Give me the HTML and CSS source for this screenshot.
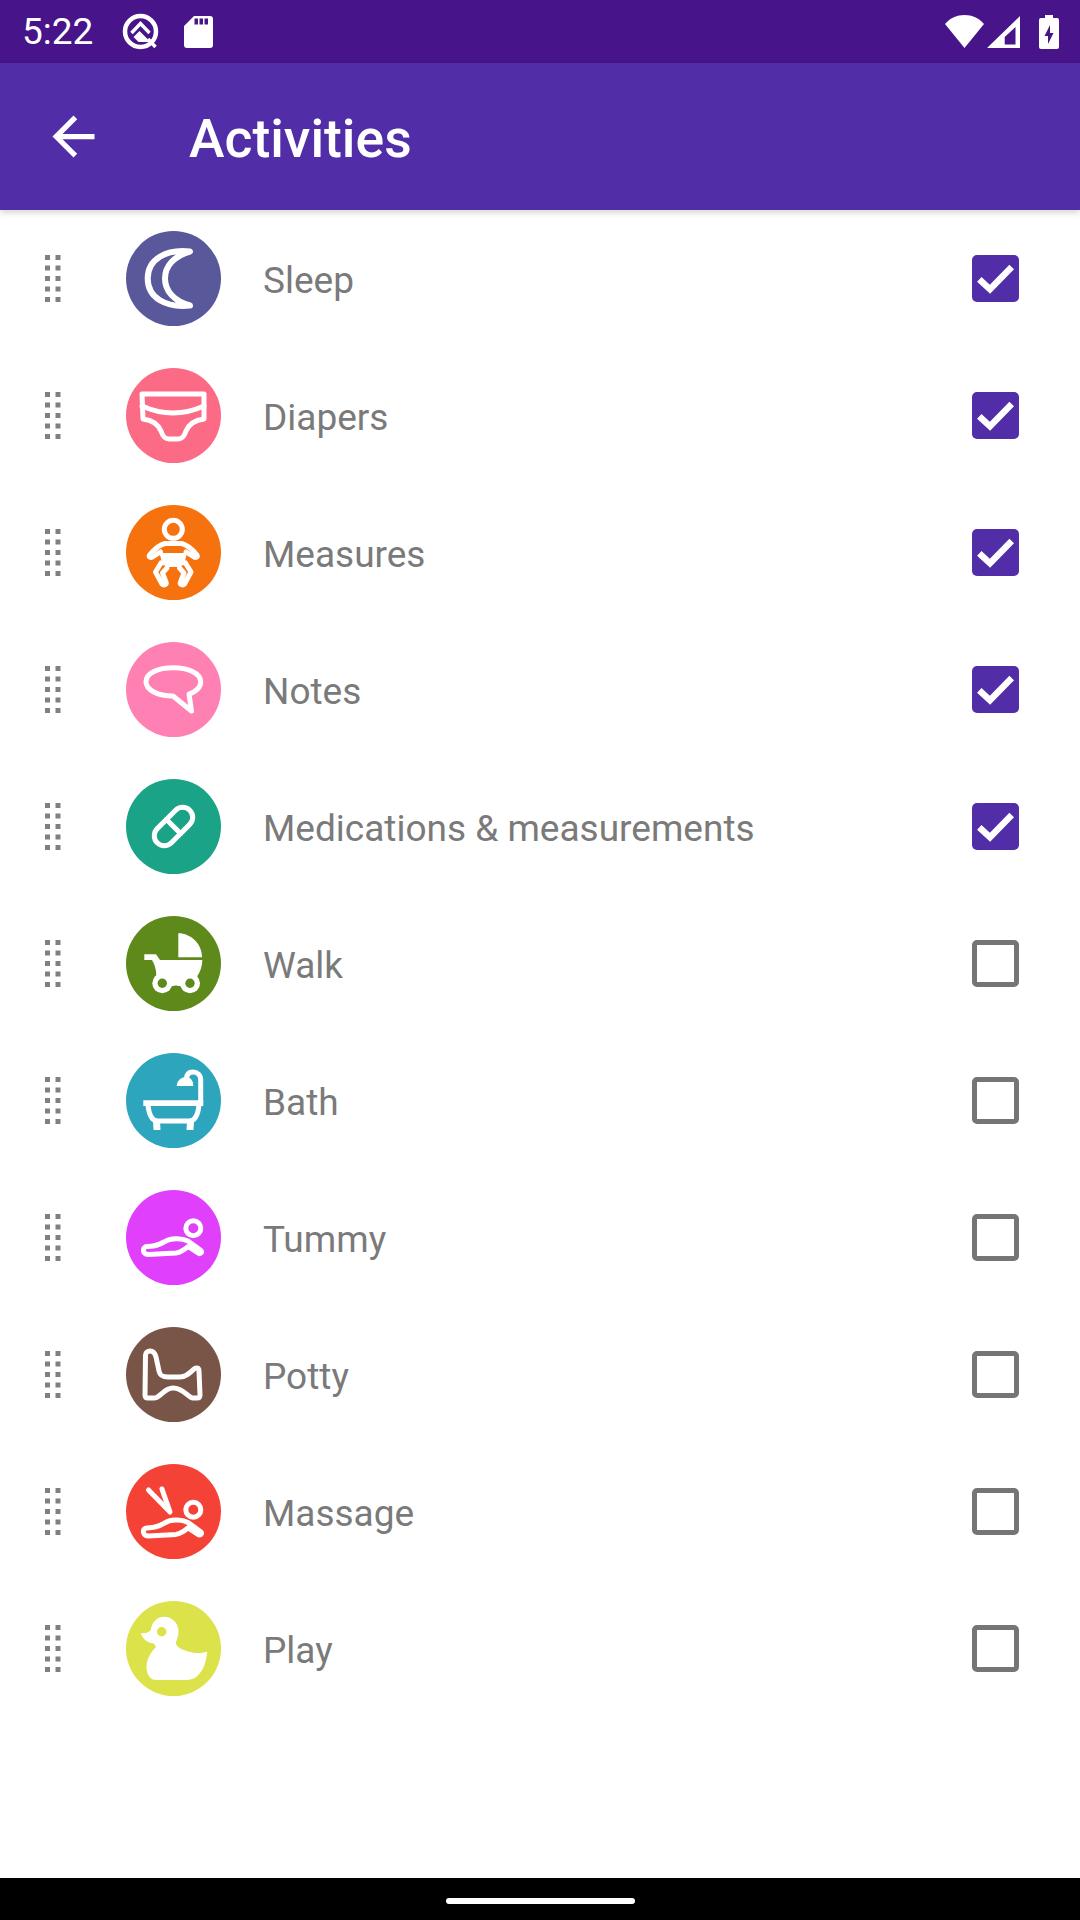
FILE: index.html
```html
<!DOCTYPE html>
<html>
<head>
    <meta charset="utf-8">
    <meta name="viewport" content="width=device-width, initial-scale=1">
    <title>Activities</title>
    <link rel="stylesheet" href="styles.css">
</head>
<body>

    <!-- Status bar -->
    <div class="status-bar">
        <span class="time">5:22</span>
        <svg class="status-q" viewBox="0 0 37 37">
            <circle cx="18.5" cy="18.5" r="15.5" fill="none" stroke="#fff" stroke-width="4.5"/>
            <path d="M9.5 20 L18.5 10.5 L27.5 20" fill="none" stroke="#fff" stroke-width="3.4"/>
            <path d="M11.5 24 L17.5 18 L28.5 29 H16.5 Z" fill="#fff"/>
            <path d="M26 26 L33.5 34" fill="none" stroke="#fff" stroke-width="3.4"/>
        </svg>
        <svg class="status-sd" viewBox="0 0 29 32">
            <path fill="#fff" fill-rule="evenodd" d="M10 0 H26 Q29 0 29 3 V29 Q29 32 26 32 H3 Q0 32 0 29 V10 Z M10.5 2.5 V8.5 H14 V2.5 Z M15.5 2.5 V8.5 H19 V2.5 Z M20.5 2.5 V8.5 H24 V2.5 Z"/>
        </svg>
        <div class="status-right">
            <svg class="status-wifi" viewBox="0 0 39 33">
                <path fill="#fff" d="M0 9 C5 3 12 0 19.5 0 C27 0 34 3 39 9 L19.5 33 Z"/>
            </svg>
            <svg class="status-signal" viewBox="0 0 33 32">
                <path fill="#fff" fill-rule="evenodd" d="M33 0 V32 H0 Z M28.5 11 L17.7 21 V28.5 H28.5 Z"/>
            </svg>
            <svg class="status-battery" viewBox="0 0 20 34">
                <path fill="#fff" fill-rule="evenodd" d="M6 0 H14 V3 H18 Q20 3 20 5 V32 Q20 34 18 34 H2 Q0 34 0 32 V5 Q0 3 2 3 H6 Z M11 10 L5.5 21 H9 V29 L14.5 18 H11 Z"/>
            </svg>
        </div>
    </div>

    <!-- App bar -->
    <div class="app-bar">
        <svg class="back" viewBox="0 0 24 24">
            <path fill="#fff" d="M20 11H7.83l5.59-5.59L12 4l-8 8 8 8 1.41-1.41L7.83 13H20v-2z"/>
        </svg>
        <h1 class="title">Activities</h1>
    </div>

    <div class="list">

        <div class="row">
            <svg class="grip" viewBox="0 0 16 47"><use href="#grip-dots"/></svg>
            <div class="avatar sleep">
                <svg viewBox="0 0 95 95">
                    <path class="line moon" d="M64 20.5 C40 18 21.7 28 21.7 47.5 C21.7 67 40 77 64 74.5 C48 70 39 60 39 47.5 C39 35 48 25 64 20.5 Z"/>
                </svg>
            </div>
            <span class="name">Sleep</span>
            <div class="check on"><svg viewBox="0 0 47 47"><use href="#tick"/></svg></div>
        </div>

        <div class="row">
            <svg class="grip" viewBox="0 0 16 47"><use href="#grip-dots"/></svg>
            <div class="avatar diapers">
                <svg viewBox="0 0 95 95">
                    <path class="line" d="M16 26 H78 V51 C70 52 63 56 60 63 C58 69 56 71 52 71 H43 C39 71 37 69 35 63 C32 56 25 52 17 51 Z"/>
                    <path class="line" d="M16 38 Q47 52 78 38"/>
                </svg>
            </div>
            <span class="name">Diapers</span>
            <div class="check on"><svg viewBox="0 0 47 47"><use href="#tick"/></svg></div>
        </div>

        <div class="row">
            <svg class="grip" viewBox="0 0 16 47"><use href="#grip-dots"/></svg>
            <div class="avatar measures">
                <svg viewBox="0 0 95 95">
                    <circle class="line" cx="47.3" cy="24.3" r="9"/>
                    <path class="line" d="M39 38.5 H55.5 C60 39.5 66 44 71 50 C72 52 70 53 68 52 L60 47 M39 38.5 C34.5 39.5 28.5 44 23.5 50 C22.5 52 24.5 53 26.5 52 L34.5 47"/>
                    <path class="solid" d="M33.5 48 H61 L58 60 L52 62 H42.5 L36.5 60 Z"/>
                    <path class="line" d="M35 58 L29.5 67 L36 79 C38 81 41 79 40 77 L36.5 68 L41 63 M59.5 58 L65 67 L58.5 79 C56.5 81 53.5 79 54.5 77 L58 68 L53.5 63"/>
                </svg>
            </div>
            <span class="name">Measures</span>
            <div class="check on"><svg viewBox="0 0 47 47"><use href="#tick"/></svg></div>
        </div>

        <div class="row">
            <svg class="grip" viewBox="0 0 16 47"><use href="#grip-dots"/></svg>
            <div class="avatar notes">
                <svg viewBox="0 0 95 95">
                    <path class="line" d="M47 54 C32 54 20 48 20 39.7 C20 31 32 25.7 47.3 25.7 C62 25.7 74.7 31 74.7 39.7 C74.7 45 70 49.5 63 52 L65.5 69 L47 54 Z"/>
                </svg>
            </div>
            <span class="name">Notes</span>
            <div class="check on"><svg viewBox="0 0 47 47"><use href="#tick"/></svg></div>
        </div>

        <div class="row">
            <svg class="grip" viewBox="0 0 16 47"><use href="#grip-dots"/></svg>
            <div class="avatar meds">
                <svg viewBox="0 0 95 95">
                    <g transform="rotate(-45 47.5 47.5)">
                        <rect class="line" x="24.5" y="37.5" width="46" height="20" rx="10"/>
                        <path class="line" d="M47.5 37.5 V57.5"/>
                    </g>
                </svg>
            </div>
            <span class="name">Medications &amp; measurements</span>
            <div class="check on"><svg viewBox="0 0 47 47"><use href="#tick"/></svg></div>
        </div>

        <div class="row">
            <svg class="grip" viewBox="0 0 16 47"><use href="#grip-dots"/></svg>
            <div class="avatar walk">
                <svg viewBox="0 0 95 95">
                    <path class="solid" d="M52.3 17.3 C65 17.3 76 28 76 41.3 H52.3 Z"/>
                    <path class="solid" d="M18.3 38.3 H30 L34 44 H76.3 C76.3 50 74 57 70 62 H30 C31 56 29 49 26 44 H18.3 Z"/>
                    <circle class="solid" cx="36.3" cy="67.3" r="10"/>
                    <circle class="solid" cx="64" cy="67.3" r="10"/>
                    <path class="solid" d="M36 60 H64 V70 H36 Z"/>
                    <circle class="hole" cx="36.3" cy="67.3" r="4.7"/>
                    <circle class="hole" cx="64" cy="67.3" r="4.7"/>
                    <path class="hole" d="M44 77.5 C45 71 48 69.5 50 69.5 C52 69.5 55 71 56 77.5 Z"/>
                </svg>
            </div>
            <span class="name">Walk</span>
            <div class="check"></div>
        </div>

        <div class="row">
            <svg class="grip" viewBox="0 0 16 47"><use href="#grip-dots"/></svg>
            <div class="avatar bath">
                <svg viewBox="0 0 95 95">
                    <path class="solid" d="M17.3 47.3 H77.3 V53 H17.3 Z"/>
                    <path class="line" d="M22 52 C23 62 26 68 32 68 H63 C69 68 72 62 73 52"/>
                    <path class="solid" d="M27 68 H34 L34.5 77 H27.5 Z M61 68 H68 L67.5 77 H60.5 Z"/>
                    <path class="line" d="M74.7 48 V27 C74.7 22 71 19 67 19 C62 19 60.5 22 60.5 26"/>
                    <path class="solid" d="M50.7 33 C51 27 56 24 60 24 C64 24 67.3 27 67.3 33 Z"/>
                </svg>
            </div>
            <span class="name">Bath</span>
            <div class="check"></div>
        </div>

        <div class="row">
            <svg class="grip" viewBox="0 0 16 47"><use href="#grip-dots"/></svg>
            <div class="avatar tummy">
                <svg viewBox="0 0 95 95">
                    <circle class="line" cx="67.3" cy="38.3" r="7.5"/>
                    <path class="line" d="M21 56.5 C28 56.5 33 55 38 52 C44 48 55 47.5 62 51 L75 60.5 C76.5 62.5 74 64.5 72 63 L62 56.5 C58 60 56 62 50 63 L22 64.5 C16 64.5 16 56.5 21 56.5 Z"/>
                </svg>
            </div>
            <span class="name">Tummy</span>
            <div class="check"></div>
        </div>

        <div class="row">
            <svg class="grip" viewBox="0 0 16 47"><use href="#grip-dots"/></svg>
            <div class="avatar potty">
                <svg viewBox="0 0 95 95">
                    <path class="line" d="M24 24 C27 24 29 26 30 30 L33 44 C34 49 37 50 42 50 H54 C60 50 64 46 68 42 C71 40 73 41 73 44 L74 68 C74 70 73 71 71 71 H67 C62 71 58 61 47 61 C38 61 34 71 28 71 H22 C20 71 19 70 19 68 L19.5 28 C19.5 25.5 21.5 24 24 24 Z"/>
                </svg>
            </div>
            <span class="name">Potty</span>
            <div class="check"></div>
        </div>

        <div class="row">
            <svg class="grip" viewBox="0 0 16 47"><use href="#grip-dots"/></svg>
            <div class="avatar massage">
                <svg viewBox="0 0 95 95">
                    <circle class="line" cx="67.3" cy="45.7" r="7.5"/>
                    <path class="line" d="M21 63.9 C28 63.9 33 62.4 38 59.4 C44 55.4 55 54.9 62 58.4 L75 67.9 C76.5 69.9 74 71.9 72 70.4 L62 63.9 C58 67.4 56 69.4 50 70.4 L22 71.9 C16 71.9 16 63.9 21 63.9 Z"/>
                    <path class="line" d="M22.5 26 L44 48 C41.5 40 38.5 33 36 25"/>
                </svg>
            </div>
            <span class="name">Massage</span>
            <div class="check"></div>
        </div>

        <div class="row">
            <svg class="grip" viewBox="0 0 16 47"><use href="#grip-dots"/></svg>
            <div class="avatar play">
                <svg viewBox="0 0 95 95">
                    <path class="solid" d="M14.7 31.7 C18 33 22 32 24.7 29 C26 21 31 15.7 38 15.7 C46 15.7 52.5 22 52.5 30 C52.5 36 50 40 50 42 C50 46 56 49 64 51 C70 52.5 76 52 81.3 50.7 C80 60 78 68 74 72 C70 77 66 79 60 79 H30 C24 79 20.5 73 20.5 66 C20.5 57 26 50 30 46 C29 44 28 43 27 42.3 C21 42 16 37 14.7 31.7 Z"/>
                    <circle class="hole" cx="35.7" cy="30.7" r="4.7"/>
                </svg>
            </div>
            <span class="name">Play</span>
            <div class="check"></div>
        </div>

    </div>

    <!-- Gesture bar -->
    <div class="nav-bar"><div class="pill"></div></div>

    <!-- Shared shapes -->
    <svg class="defs" width="0" height="0">
        <defs>
            <g id="grip-dots" fill="#808080">
                <rect x="0" y="0" width="5" height="5"/><rect x="10.5" y="0" width="5" height="5"/>
                <rect x="0" y="10.5" width="5" height="5"/><rect x="10.5" y="10.5" width="5" height="5"/>
                <rect x="0" y="21" width="5" height="5"/><rect x="10.5" y="21" width="5" height="5"/>
                <rect x="0" y="31.5" width="5" height="5"/><rect x="10.5" y="31.5" width="5" height="5"/>
                <rect x="0" y="42" width="5" height="5"/><rect x="10.5" y="42" width="5" height="5"/>
            </g>
            <path id="tick" d="M7.3 24.3 L18 34.3 L39.7 12" fill="none" stroke="#fff" stroke-width="6.5"/>
        </defs>
    </svg>

</body>
</html>
```

FILE: styles.css
```css
body {
    background-color: #fff;
    font-family: "Roboto", sans-serif;
    margin: 0;
    padding: 0;
    width: 1080px;
    height: 1920px;
    display: flex;
    flex-direction: column;
    overflow: hidden;
}
.status-bar {
    height: 63px;
    background-color: #47148a;
    display: flex;
    align-items: center;
    padding: 0 21px 0 22px;
    color: #fff;
}
.time {
    font-size: 37px;
    width: 100px;
}
.status-q {
    width: 37px;
    height: 37px;
    margin-right: 25px;
}
.status-sd {
    width: 29px;
    height: 32px;
}
.status-right {
    margin-left: auto;
    display: flex;
    align-items: center;
}
.status-wifi {
    width: 39px;
    height: 33px;
}
.status-signal {
    width: 33px;
    height: 32px;
    margin-left: 3px;
}
.status-battery {
    width: 20px;
    height: 34px;
    margin-left: 19px;
}
.app-bar {
    height: 147px;
    background-color: #512da8;
    display: flex;
    align-items: center;
    padding-left: 42px;
    box-shadow: 0 3px 6px rgba(0, 0, 0, 0.16);
}
.back {
    width: 63px;
    height: 63px;
}
.title {
    margin: 3px 0 0 84px;
    font-size: 53.5px;
    font-weight: 500;
    color: #fff;
}
.list {
    flex: 1;
}
.row {
    height: 137px;
    display: flex;
    align-items: center;
    padding: 0 61px 0 45px;
}
.grip {
    width: 16px;
    height: 47px;
}
.avatar {
    width: 95px;
    height: 95px;
    border-radius: 50%;
    margin-left: 65px;
    background-color: var(--tint);
    color: var(--tint);
}
.avatar svg {
    display: block;
    width: 95px;
    height: 95px;
}
.line {
    fill: none;
    stroke: #fff;
    stroke-width: 5;
    stroke-linecap: round;
    stroke-linejoin: round;
}
.moon {
    stroke-width: 6;
}
.solid {
    fill: #fff;
}
.hole {
    fill: currentColor;
}
.sleep { --tint: #58589a; }
.diapers { --tint: #fb6b85; }
.measures { --tint: #f5720f; }
.notes { --tint: #ff80b3; }
.meds { --tint: #1aa386; }
.walk { --tint: #5e8a1c; }
.bath { --tint: #2da6bd; }
.tummy { --tint: #e040fb; }
.potty { --tint: #795548; }
.massage { --tint: #f44336; }
.play { --tint: #dce249; }
.name {
    margin-left: 42px;
    font-size: 37px;
    color: #7a7a7a;
    flex: 1;
    padding-top: 3px;
}
.check {
    width: 47px;
    height: 47px;
    box-sizing: border-box;
    border: 5px solid #757575;
    border-radius: 5px;
    margin-top: -1px;
}
.check.on {
    border: none;
    background-color: #512da8;
}
.check svg {
    display: block;
    width: 47px;
    height: 47px;
}
.nav-bar {
    height: 42px;
    background-color: #000;
    display: flex;
    justify-content: center;
    padding-top: 20px;
    box-sizing: border-box;
}
.pill {
    width: 189px;
    height: 6px;
    border-radius: 3px;
    background-color: #fff;
}
.defs {
    display: none;
}
```
